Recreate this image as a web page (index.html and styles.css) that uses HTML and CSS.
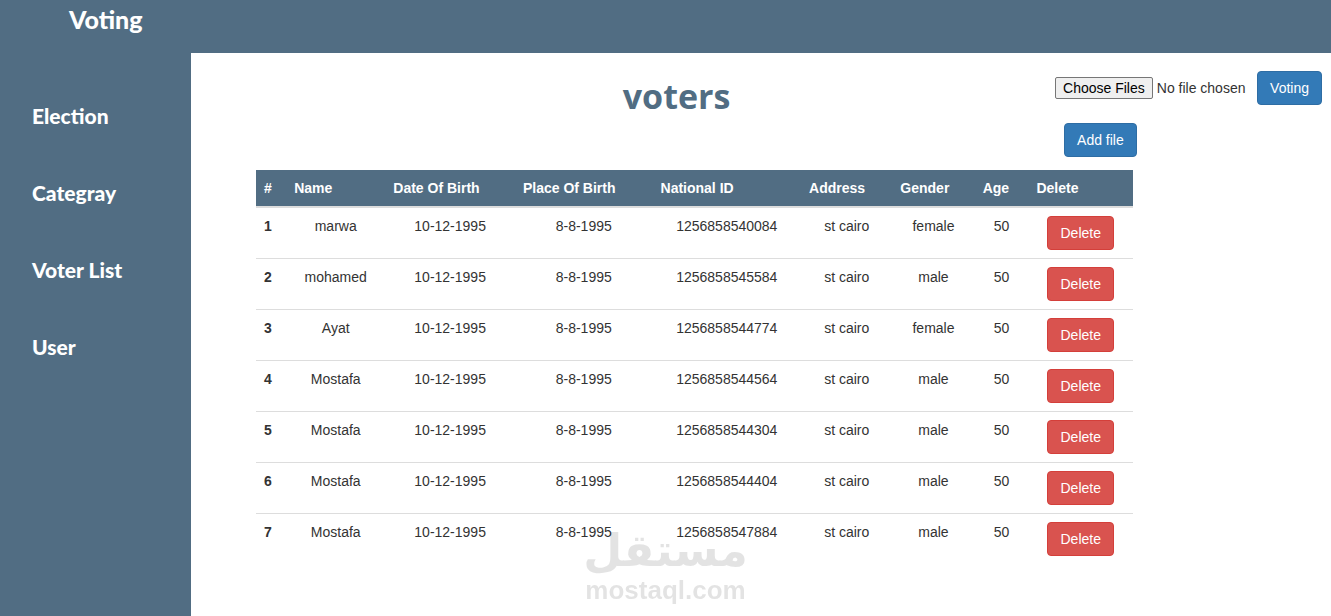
FILE: index.html
```html
<!DOCTYPE html>
<html lang="en">
<head>
  <meta charset="UTF-8" />
  <meta name="viewport" content="width=device-width, initial-scale=1.0"/>
  <title>Voting - voters</title>
  <link rel="stylesheet" href="styles.css">
</head>

<body>
  <header class="navbar">
    <a class="brand" href="#">Voting</a>
  </header>

  <div class="layout">
    <nav class="sidebar">
      <a href="#">Election</a>
      <a href="#">Categray</a>
      <a href="#">Voter List</a>
      <a href="#">User</a>
    </nav>

    <main class="content">
      <div class="top">
        <h1>voters</h1>
        <form class="upload">
          <div class="upload-row">
            <input type="file" id="file" aria-label="Voters file" multiple />
            <button type="button" class="btn btn-primary">Voting</button>
          </div>
          <button type="button" class="btn btn-primary btn-add">Add file</button>
        </form>
      </div>

      <table class="table">
        <thead>
          <tr>
            <th scope="col">#</th>
            <th scope="col">Name</th>
            <th scope="col">Date Of Birth</th>
            <th scope="col">Place Of Birth</th>
            <th scope="col">National ID</th>
            <th scope="col">Address</th>
            <th scope="col">Gender</th>
            <th scope="col">Age</th>
            <th scope="col">Delete</th>
          </tr>
        </thead>
        <tbody>
          <tr>
            <th scope="row">1</th>
            <td>marwa</td>
            <td>10-12-1995</td>
            <td>8-8-1995</td>
            <td>1256858540084</td>
            <td>st cairo</td>
            <td>female</td>
            <td>50</td>
            <td><button type="button" class="btn btn-danger">Delete</button></td>
          </tr>
          <tr>
            <th scope="row">2</th>
            <td>mohamed</td>
            <td>10-12-1995</td>
            <td>8-8-1995</td>
            <td>1256858545584</td>
            <td>st cairo</td>
            <td>male</td>
            <td>50</td>
            <td><button type="button" class="btn btn-danger">Delete</button></td>
          </tr>
          <tr>
            <th scope="row">3</th>
            <td>Ayat</td>
            <td>10-12-1995</td>
            <td>8-8-1995</td>
            <td>1256858544774</td>
            <td>st cairo</td>
            <td>female</td>
            <td>50</td>
            <td><button type="button" class="btn btn-danger">Delete</button></td>
          </tr>
          <tr>
            <th scope="row">4</th>
            <td>Mostafa</td>
            <td>10-12-1995</td>
            <td>8-8-1995</td>
            <td>1256858544564</td>
            <td>st cairo</td>
            <td>male</td>
            <td>50</td>
            <td><button type="button" class="btn btn-danger">Delete</button></td>
          </tr>
          <tr>
            <th scope="row">5</th>
            <td>Mostafa</td>
            <td>10-12-1995</td>
            <td>8-8-1995</td>
            <td>1256858544304</td>
            <td>st cairo</td>
            <td>male</td>
            <td>50</td>
            <td><button type="button" class="btn btn-danger">Delete</button></td>
          </tr>
          <tr>
            <th scope="row">6</th>
            <td>Mostafa</td>
            <td>10-12-1995</td>
            <td>8-8-1995</td>
            <td>1256858544404</td>
            <td>st cairo</td>
            <td>male</td>
            <td>50</td>
            <td><button type="button" class="btn btn-danger">Delete</button></td>
          </tr>
          <tr>
            <th scope="row">7</th>
            <td>Mostafa</td>
            <td>10-12-1995</td>
            <td>8-8-1995</td>
            <td>1256858547884</td>
            <td>st cairo</td>
            <td>male</td>
            <td>50</td>
            <td><button type="button" class="btn btn-danger">Delete</button></td>
          </tr>
        </tbody>
      </table>
    </main>
  </div>

  <div class="watermark">
    <span class="watermark-ar" lang="ar" dir="rtl">مستقل</span>
    <span class="watermark-en">mostaql.com</span>
  </div>
</body>
</html>
```
FILE: styles.css
```css
/* Reset and base */
* { margin:0; padding:0; box-sizing:border-box; }
body {
  font-family:"Liberation Sans", Arial, sans-serif;
  font-size:14px; line-height:20px; color:#333; background:#fff;
  min-height:100vh; display:flex; flex-direction:column;
}
button, input { font-family:inherit; font-size:14px; line-height:20px; }

/* Navbar */
.navbar { background:#516d83; height:53px; padding:4px 69px; }
.brand {
  font-family:Lato, sans-serif; font-size:25px; line-height:30px; font-weight:900;
  color:#fff; text-decoration:none;
}

/* Sidebar */
.layout { display:flex; flex:1; }
.sidebar {
  flex:0 0 191px; background:#516d83; padding:49px 32px;
  display:flex; flex-direction:column; gap:49px;
}
.sidebar a {
  font-family:Lato, sans-serif; font-size:21px; line-height:28px; font-weight:900;
  color:#fff; text-decoration:none;
}

.content { flex:1; min-width:0; padding-top:18px; }

/* Title and upload */
.top { display:flex; padding:0 9px 13px 107px; }
.top h1 {
  flex:1; text-align:center; color:#516d83;
  font-family:"Open Sans", sans-serif; font-size:34px; line-height:50px; font-weight:700;
}
.upload { display:flex; flex-direction:column; align-items:flex-start; gap:18px; }
.upload-row { display:flex; align-items:center; }
.upload-row input { width:202px; color:#333; }
.upload-row input::file-selector-button {
  font-family:inherit; font-size:14px; line-height:18px; padding:1px 7px;
  border:1px solid #767676; border-radius:2px; background:#efefef; color:#000;
  margin-right:4px;
}
.btn-add { margin-left:9px; }

.btn {
  padding:6px 12px; border:1px solid transparent; border-radius:4px;
  color:#fff; cursor:pointer; white-space:nowrap;
}
.btn-primary { background:#337ab7; border-color:#2e6da4; }
.btn-primary:hover { background:#286090; }
.btn-danger { background:#d9534f; border-color:#d43f3a; }
.btn-danger:hover { background:#c9302c; }

/* Voters table */
.table { width:calc(100% - 263px); margin-left:65px; border-collapse:collapse; }
.table th, .table td { padding:8px; vertical-align:top; border-top:1px solid #ddd; }
.table th { text-align:left; }
.table td { text-align:center; }
.table thead th {
  background:#516d83; color:#fff; border-top:0; border-bottom:2px solid #ddd;
}

/* Watermark */
.watermark {
  position:fixed; left:0; right:0; bottom:12px; opacity:.11; color:#000;
  display:flex; flex-direction:column; align-items:center; pointer-events:none;
}
.watermark-ar { font-family:"DejaVu Sans", sans-serif; font-size:45px; line-height:50px; font-weight:700; }
.watermark-en { font-family:"Liberation Sans", Arial, sans-serif; font-size:26px; line-height:28px; font-weight:700; }
```
